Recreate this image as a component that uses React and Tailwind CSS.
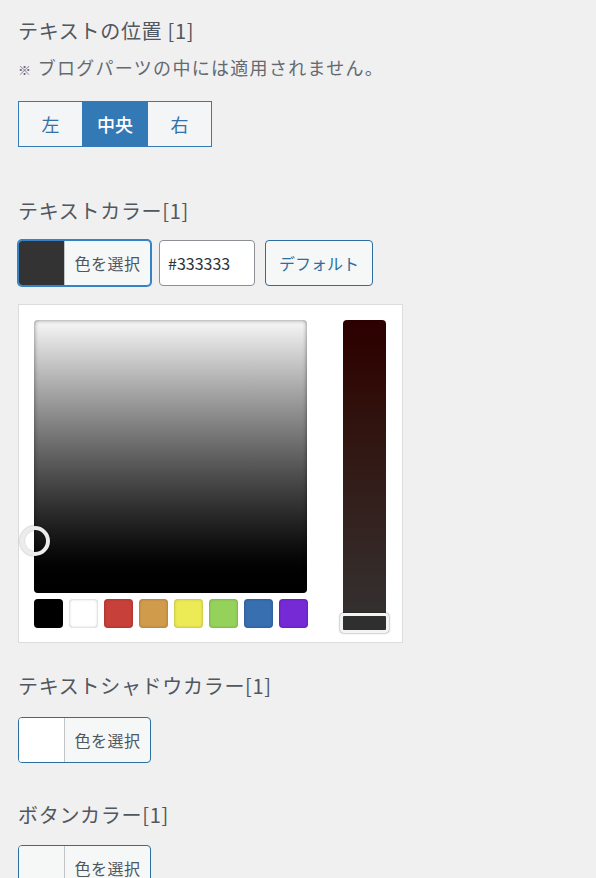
import React from "react"

const FONT = { fontFamily: '"Noto Sans CJK JP", "Noto Sans", sans-serif' }

const SWATCHES = ["#000000", "#ffffff", "#c8403a", "#d09b4b", "#ecea55", "#95d25b", "#386fb1", "#762ad6"]

function Heading({ children }) {
  return <h3 className="m-0 text-[20px] leading-[24px] tracking-[0.7px] text-[#50575e]">{children}</h3>
}

function ColorButton({ color, focused }) {
  return (
    <button
      className={
        "flex h-[46px] w-[133px] overflow-hidden rounded-[4px] border bg-[#f6f7f7] " +
        (focused ? "border-[#3582c4] shadow-[0_0_0_1px_#3582c4]" : "border-[#2c6e9e]")
      }
    >
      <span className="h-full w-[46px] border-r border-[#c3c4c7]" style={{ background: color }} />
      <span className="flex flex-1 items-center justify-center text-[16px] tracking-[0.5px] text-[#50575e]">色を選択</span>
    </button>
  )
}

function Picker() {
  return (
    <div className="mt-[18px] w-[385px] border border-[#dcdcde] bg-white px-[15px] pb-[12px] pt-[15px]">
      <div className="flex items-start gap-[35px]">
        <div className="flex flex-col gap-[6px]">
          <div className="relative h-[273px] w-[273px] rounded-[4px] bg-gradient-to-b from-[#f8f8f8] to-black shadow-[inset_0_0_4px_rgba(0,0,0,0.5)]">
            <span className="absolute left-[-14px] top-[206px] h-[30px] w-[30px] rounded-full border-[4px] border-[#ececec] shadow-[0_0_2px_rgba(0,0,0,0.5),inset_0_0_2px_rgba(0,0,0,0.4)]" />
          </div>
          <div className="flex gap-[6px]">
            {SWATCHES.map((c) => (
              <span
                key={c}
                className="h-[29px] w-[29px] rounded-[4px] shadow-[inset_0_0_3px_rgba(0,0,0,0.3)]"
                style={{ background: c }}
              />
            ))}
          </div>
        </div>
        <div className="relative h-[310px] w-[43px] rounded-[4px] bg-gradient-to-b from-[#2c0000] to-[#333333]">
          <span className="absolute bottom-[-3px] left-[-3px] h-[20px] w-[49px] rounded-[4px] border-[3px] border-[#f4f4f4] bg-[#2f2f2f] shadow-[0_0_2px_rgba(0,0,0,0.6)]" />
        </div>
      </div>
    </div>
  )
}

export default function App() {
  return (
    <div className="min-h-screen bg-[#f0f0f1] px-[18px] pt-[19px]" style={FONT}>
      <Heading>テキストの位置 [1]</Heading>
      <p className="mt-[12px] text-[18px] leading-[24px] tracking-[1.3px] text-[#646970]">
        <span className="text-[13px]">※</span> ブログパーツの中には適用されません。
      </p>

      <div className="mt-[19px] flex h-[46px] w-[194px] border border-[#3379b5] text-[18px]">
        <button className="w-[63px] bg-[#f3f5f6] text-[#3371aa]">左</button>
        <button className="w-[66px] bg-[#3379b5] font-medium text-white">中央</button>
        <button className="flex-1 bg-[#f3f5f6] text-[#3371aa]">右</button>
      </div>

      <div className="mt-[52px]">
        <Heading>テキストカラー[1]</Heading>
      </div>
      <div className="mt-[17px] flex items-center gap-[8px]">
        <ColorButton color="#333333" focused />
        <input
          readOnly
          value="#333333"
          className="h-[46px] w-[96px] rounded-[4px] border border-[#8c8f94] bg-white px-[8px] text-[16px] text-[#2c3338] outline-none"
        />
        <button className="ml-[2px] h-[46px] w-[108px] rounded-[4px] border border-[#2c6e9e] bg-[#f6f7f7] text-[16px] text-[#2c6e9e]">
          デフォルト
        </button>
      </div>
      <Picker />

      <div className="mt-[31px]">
        <Heading>テキストシャドウカラー[1]</Heading>
      </div>
      <div className="mt-[19px]">
        <ColorButton color="#ffffff" />
      </div>

      <div className="mt-[40px]">
        <Heading>ボタンカラー[1]</Heading>
      </div>
      <div className="mt-[18px]">
        <ColorButton color="#f6f7f7" />
      </div>
    </div>
  )
}
